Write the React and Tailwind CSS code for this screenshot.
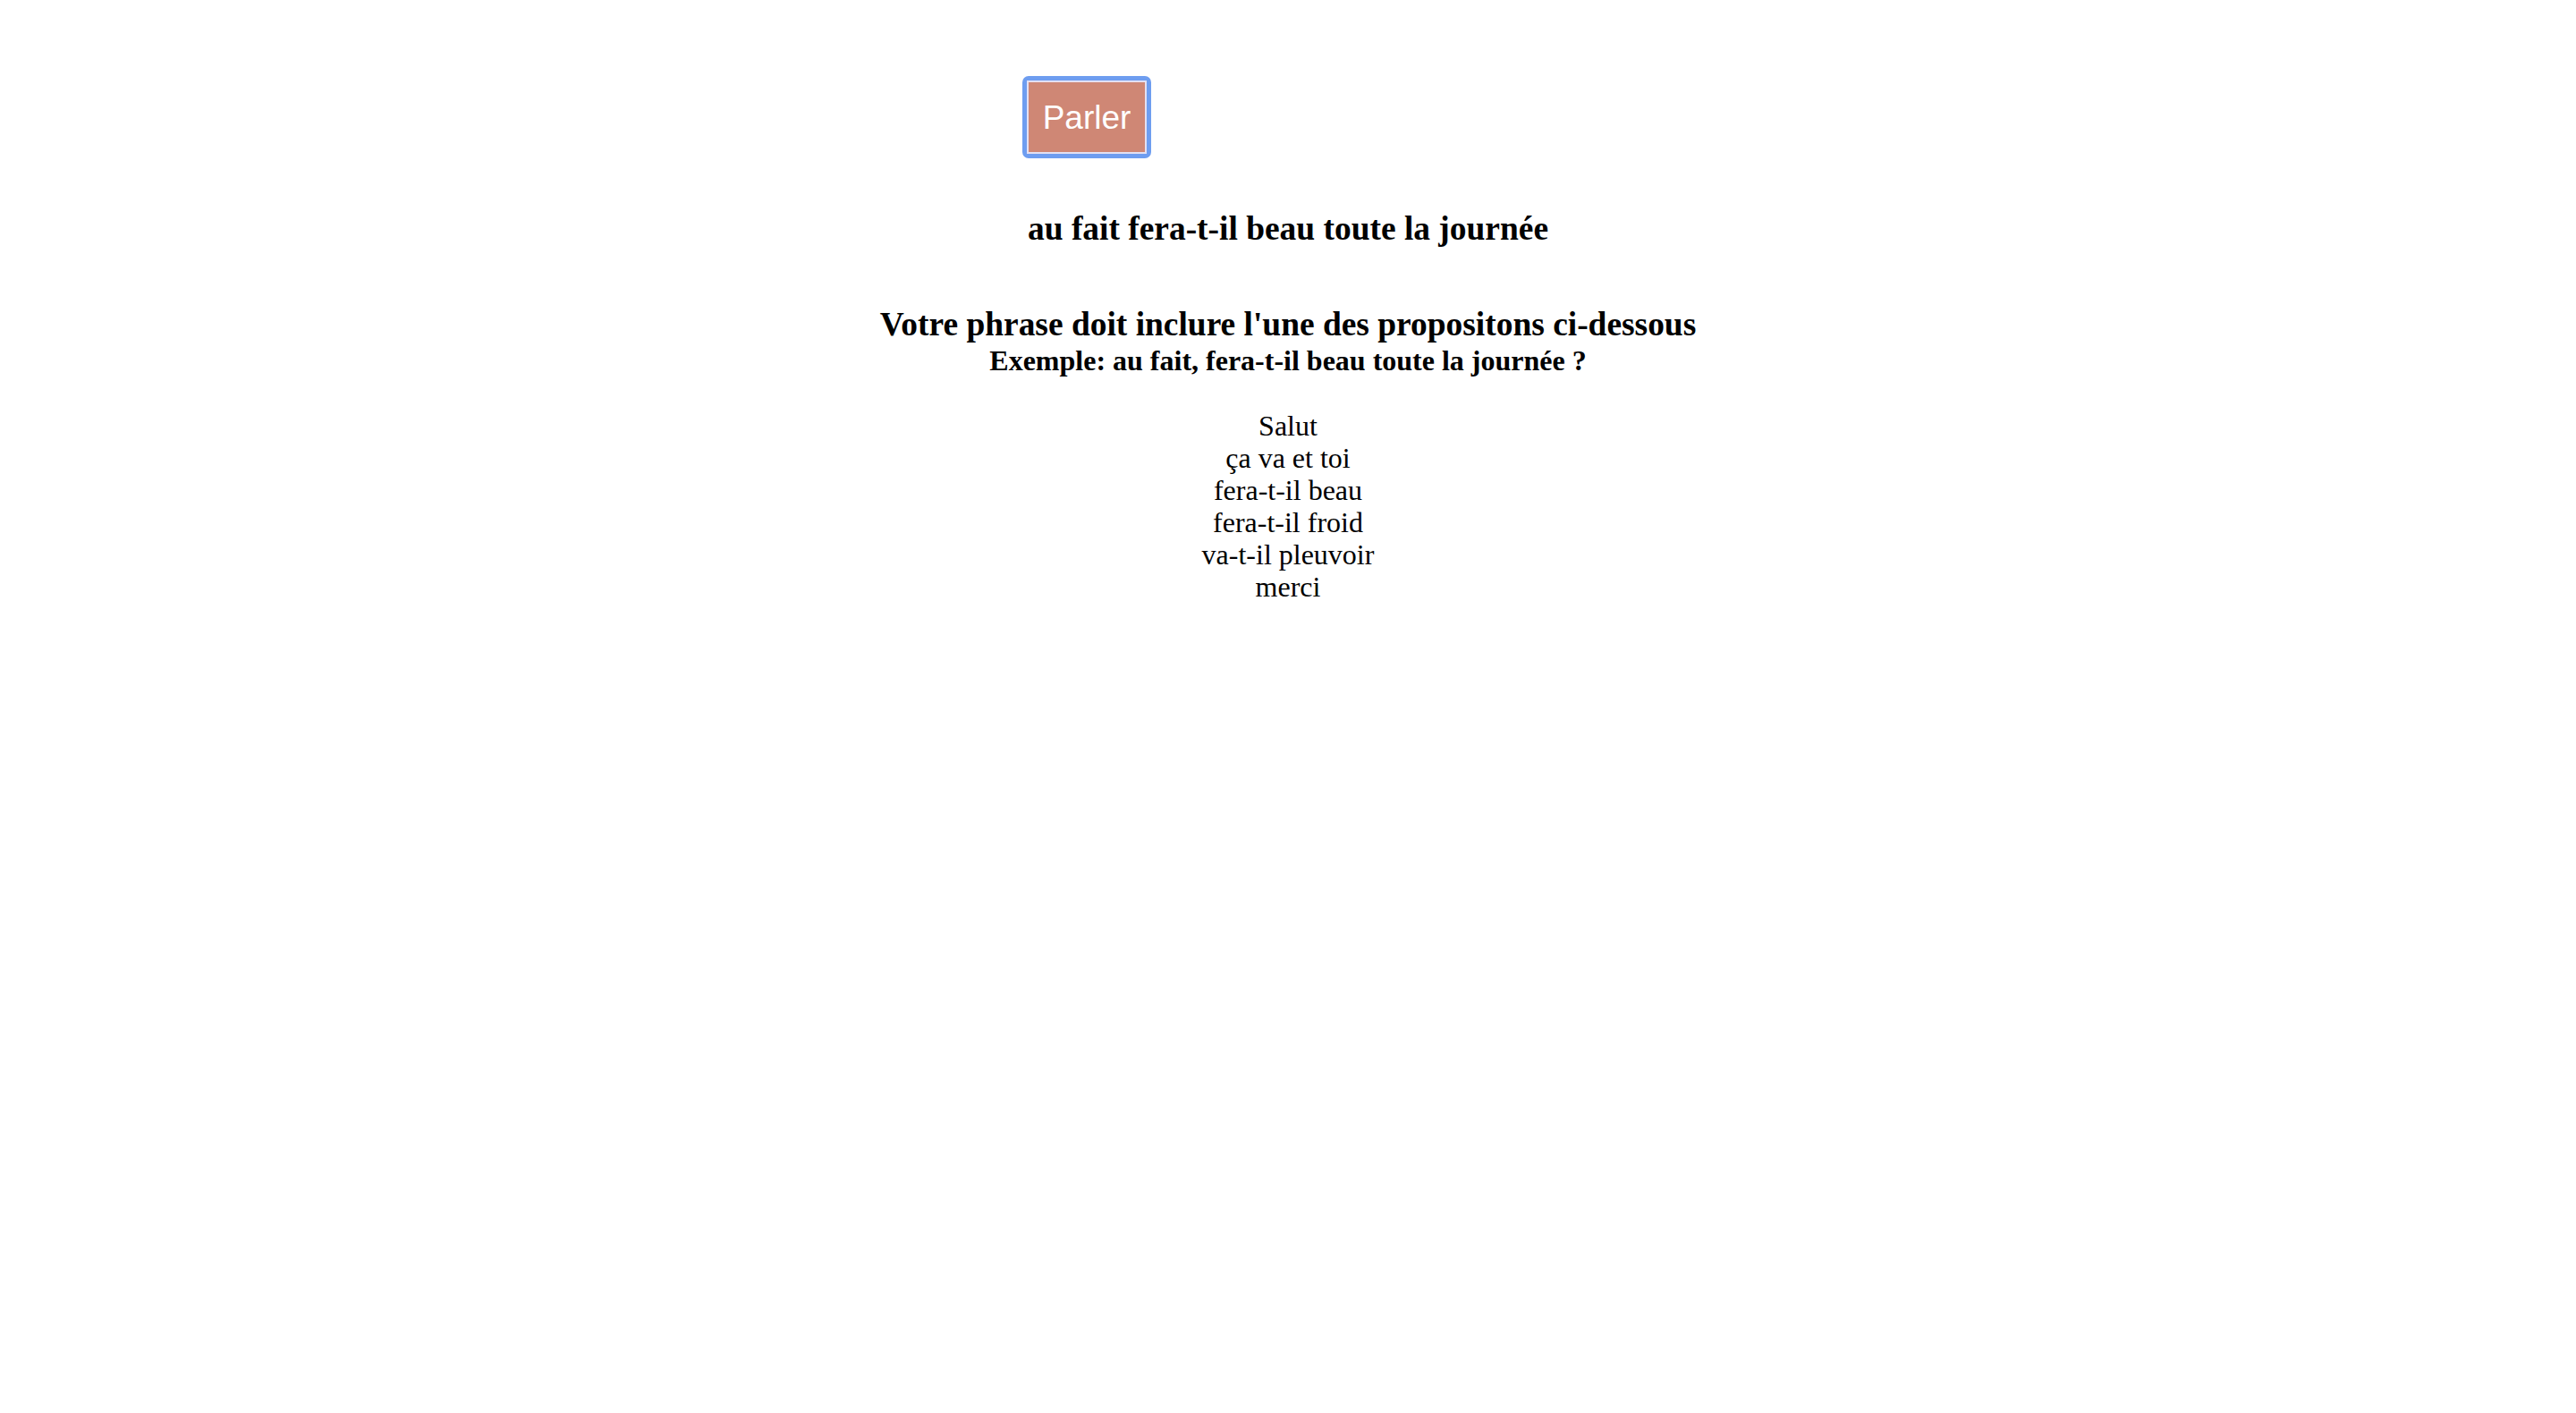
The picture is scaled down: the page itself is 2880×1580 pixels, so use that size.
export default function App() {
  const propositions = [
    "Salut",
    "ça va et toi",
    "fera-t-il beau",
    "fera-t-il froid",
    "va-t-il pleuvoir",
    "merci",
  ];

  return (
    <div className="min-h-screen bg-white text-black font-['Liberation_Serif',serif] text-center">
      <div className="flex justify-center pt-[85px]">
        <span className="mr-[450px] rounded-[7px] bg-[#6e9df0] p-[5px]">
          <button className="block w-[134px] h-[82px] border-2 border-[#e3e0f3] bg-[#cf8775] text-white text-[37px] leading-none font-['Liberation_Sans',sans-serif]">
            Parler
          </button>
        </span>
      </div>
      <h3 className="mt-[57px] text-[37.44px] font-bold leading-[1.15]">
        au fait fera-t-il beau toute la journée
      </h3>
      <h2 className="mt-[64px] text-[37.44px] font-bold leading-[1.15]">
        Votre phrase doit inclure l'une des propositons ci-dessous
      </h2>
      <h4 className="mt-[1px] text-[32px] font-bold leading-[36px]">
        Exemple: au fait, fera-t-il beau toute la journée ?
      </h4>
      <ul className="mt-[37px] text-[32px] leading-[36px]">
        {propositions.map((p) => (
          <li key={p}>{p}</li>
        ))}
      </ul>
    </div>
  );
}
